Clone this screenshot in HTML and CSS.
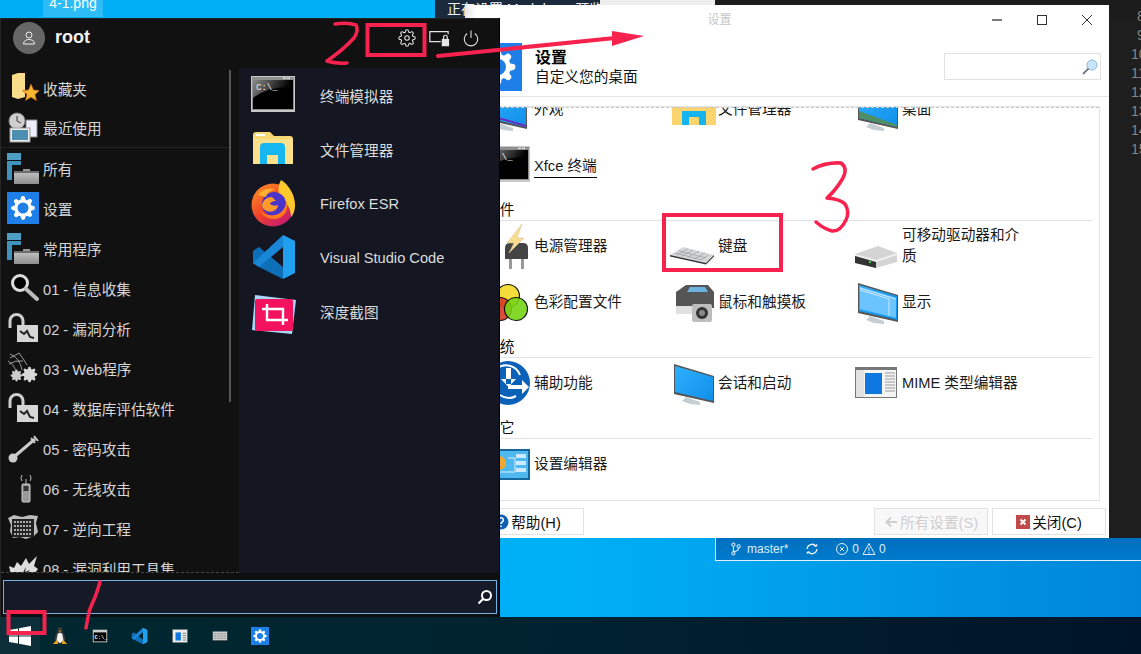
FILE: index.html
```html
<!DOCTYPE html>
<html lang="zh-CN">
<head>
<meta charset="utf-8">
<title>设置</title>
<link rel="stylesheet" href="styles.css">
</head>
<body>
<svg class="sprites" aria-hidden="true">
  <defs>
    <linearGradient id="g-term" x1="0" y1="0" x2="1" y2="0.3"><stop offset="0" stop-color="#8a8a8a"/><stop offset="1" stop-color="#000"/></linearGradient>
    <linearGradient id="g-tray" x1="0" y1="0" x2="0" y2="1"><stop offset="0" stop-color="#bdbdbd"/><stop offset="1" stop-color="#8e8e8e"/></linearGradient>
    <linearGradient id="g-fox" x1="0" y1="0" x2="0.8" y2="1"><stop offset="0" stop-color="#ff9a1f"/><stop offset="0.55" stop-color="#f0402c"/><stop offset="1" stop-color="#c0187a"/></linearGradient>
    <linearGradient id="g-screen" x1="0" y1="0" x2="1" y2="1"><stop offset="0" stop-color="#2fb0ff"/><stop offset="1" stop-color="#0f8fe8"/></linearGradient>
    <symbol id="gear" viewBox="0 0 24 24"><path d="M19.4 15a1.65 1.65 0 0 0 .33 1.82l.06.06a2 2 0 0 1 0 2.83 2 2 0 0 1-2.83 0l-.06-.06a1.65 1.65 0 0 0-1.82-.33 1.65 1.65 0 0 0-1 1.51V21a2 2 0 0 1-2 2 2 2 0 0 1-2-2v-.09A1.65 1.65 0 0 0 9 19.4a1.65 1.65 0 0 0-1.82.33l-.06.06a2 2 0 0 1-2.83 0 2 2 0 0 1 0-2.83l.06-.06a1.65 1.65 0 0 0 .33-1.82 1.65 1.65 0 0 0-1.51-1H3a2 2 0 0 1-2-2 2 2 0 0 1 2-2h.09A1.65 1.65 0 0 0 4.6 9a1.65 1.65 0 0 0-.33-1.82l-.06-.06a2 2 0 0 1 0-2.83 2 2 0 0 1 2.83 0l.06.06a1.65 1.65 0 0 0 1.82.33H9a1.65 1.65 0 0 0 1-1.51V3a2 2 0 0 1 2-2 2 2 0 0 1 2 2v.09a1.65 1.65 0 0 0 1 1.51 1.65 1.65 0 0 0 1.82-.33l.06-.06a2 2 0 0 1 2.83 0 2 2 0 0 1 0 2.83l-.06.06a1.65 1.65 0 0 0-.33 1.82V9a1.65 1.65 0 0 0 1.51 1H21a2 2 0 0 1 2 2 2 2 0 0 1-2 2h-.09a1.65 1.65 0 0 0-1.51 1z"/></symbol>
    <symbol id="bluegear" viewBox="0 0 32 32"><rect width="32" height="32" fill="#1f7fe8"/><use href="#gear" x="3" y="3" width="26" height="26" fill="#fff"/><circle cx="16" cy="16" r="5.500" fill="#1f7fe8"/></symbol>
    <symbol id="folders" viewBox="0 0 32 32"><rect x="0" y="1" width="14" height="7" fill="#4f9fc4"/><path d="M0 9h14v4H5v15H0z" fill="#3f93bb"/><rect x="16" y="17" width="7" height="2" fill="#999"/><rect x="7" y="19" width="25" height="2" fill="#6d6d6d"/><rect x="7" y="21" width="25" height="11" fill="url(#g-tray)"/></symbol>
    <symbol id="lock" viewBox="0 0 32 32"><path d="M3 16V9a6.500 6.500 0 0 1 13 0v4" fill="none" stroke="#cfcfcf" stroke-width="3"/><rect x="10" y="13" width="21" height="17" fill="#d6d6d6"/><path d="M13 19l4 3 3-3 3 6 4 1" fill="none" stroke="#222" stroke-width="2"/></symbol>
    <symbol id="terminal" viewBox="0 0 48 48"><rect x="3" y="5" width="44" height="36" fill="#c8c8c8"/><rect x="4" y="6" width="42" height="33" fill="#8f8f8f"/><rect x="5" y="9" width="40" height="29" fill="#000"/><path d="M5 9h36v7q-22 0-36 11z" fill="url(#g-term)"/><rect x="35" y="6.500" width="3" height="1.500" fill="#ddd"/><rect x="39" y="6.500" width="3" height="1.500" fill="#ddd"/><text x="8" y="19" class="term-text">C:\_</text></symbol>
    <symbol id="monitor" viewBox="0 0 48 48"><path d="M4 5l40 12v27L4 35z" fill="#555"/><path d="M5 7l38 11v24L5 33z" fill="url(#g-screen)"/><path d="M16 38l14 5v3l-10-1-8-3z" fill="#c5cdd2"/></symbol>
    <symbol id="vscode" viewBox="0 0 48 48"><path d="M32 46V34L8 14l-6 4v12l6 4z" fill="#0d6fb8"/><path d="M32 2v12L8 34l-6-4z" fill="#1a86d8"/><path d="M32 2l12 6v32l-12 6z" fill="#21a0f0"/></symbol>
  </defs>
</svg>

<div class="desktop">
  <div class="file-label">4-1.png</div>

  <div class="code-window">
    <div class="code-tabs">
      <div class="code-status-title">正在设置 Markdown 预览</div>
      <div class="code-tab-light"></div>
      <div class="code-tab-dark"></div>
    </div>
    <div class="line-numbers">
      <span class="one">8</span><span class="one">9</span><span>10</span><span>11</span><span>12</span><span>13</span><span>14</span><span>15</span>
    </div>
  </div>

  <div class="status-bar">
    <svg class="st-ic" viewBox="0 0 14 16"><g fill="none" stroke="#dfeefa" stroke-width="1.200"><circle cx="4" cy="3" r="1.800"/><circle cx="4" cy="13" r="1.800"/><circle cx="10" cy="5" r="1.800"/><path d="M4 5v6M10 7q0 3-6 4"/></g></svg>
    <span class="st-branch">master*</span>
    <svg class="st-ic st-sync" viewBox="0 0 16 16"><g fill="none" stroke="#eaf4fc" stroke-width="1.500"><path d="M2.500 8a5.500 5.500 0 0 1 10-3"/><path d="M13.500 8a5.500 5.500 0 0 1-10 3"/></g><path d="M10 5h4V2zM6 11H2v3z" fill="#eaf4fc"/></svg>
    <svg class="st-ic st-err" viewBox="0 0 14 14"><g fill="none" stroke="#dfeefa" stroke-width="1"><circle cx="7" cy="7" r="5.500"/><path d="M5 5l4 4M9 5l-4 4"/></g></svg>
    <span>0</span>
    <svg class="st-ic" viewBox="0 0 14 14"><path d="M7 1.500L13 12.500H1zM7 5v4M7 10v1.500" fill="none" stroke="#dfeefa" stroke-width="1"/></svg>
    <span>0</span>
  </div>

  <section class="settings">
    <div class="titlebar">
      <div class="win-title">设置</div>
      <div class="win-btn"><svg viewBox="0 0 12 12"><path d="M1 6h10" stroke="#222" stroke-width="1.200"/></svg></div>
      <div class="win-btn"><svg viewBox="0 0 12 12"><rect x="1.500" y="1.500" width="9" height="9" fill="none" stroke="#333"/></svg></div>
      <div class="win-btn"><svg viewBox="0 0 12 12"><path d="M1 1l10 10M11 1L1 11" stroke="#333"/></svg></div>
    </div>
    <header class="set-head">
      <svg class="ic48" viewBox="0 0 48 48"><rect width="48" height="48" fill="#1f7fe8"/><use href="#gear" x="5" y="5" width="38" height="38" fill="#fff"/><circle cx="24" cy="24" r="8" fill="#1f7fe8"/></svg>
      <div class="set-head-text">
        <h1>设置</h1>
        <p>自定义您的桌面</p>
      </div>
      <div class="set-search">
        <svg viewBox="0 0 18 18"><circle cx="11" cy="7" r="5" fill="#c7e6fb" stroke="#8fb8d6"/><path d="M7.500 10.500L2 16" stroke="#6d7a85" stroke-width="1.800"/></svg>
      </div>
    </header>

    <div class="frame">
      <div class="frame-scroll">
        <div class="grid">
          <div class="item">
            <svg class="ic48 ic-left" viewBox="0 0 48 48"><use href="#monitor" width="48" height="48"/><path d="M5 30l38 11" stroke="#6a2fc0" stroke-width="2"/></svg>
            <span>外观</span>
          </div>
          <div class="item">
            <svg class="ic48" viewBox="0 0 48 48"><path d="M2 12h44v28H2z" fill="#fbd46e"/><path d="M12 26h24v14h-7V32H19v8h-7z" fill="#16b4ee"/></svg>
            <span>文件管理器</span>
          </div>
          <div class="item">
            <svg class="ic48" viewBox="0 0 48 48"><use href="#monitor" width="48" height="48"/><path d="M5 26l38 14v2L5 33z" fill="#4f8f63"/></svg>
            <span>桌面</span>
          </div>
          <div class="item">
            <svg class="ic48 ic-left" viewBox="0 0 48 48"><use href="#terminal" width="48" height="48"/></svg>
            <span class="underlined">Xfce 终端</span>
          </div>
        </div>

        <h2 class="cat">硬件</h2>
        <div class="grid">
          <div class="item">
            <svg class="ic48" viewBox="0 0 48 48"><path d="M19 26q0-5 5-5h13q5 0 5 5v11H19z" fill="#444"/><path d="M23 37h3v10h-3zM35 37h3v10h-3z" fill="#999"/><path d="M36 2L21 21h7l-5 10 15-15h-7l5-14z" fill="#f9dc8e" stroke="#cfc8a0" stroke-width=".6"/></svg>
            <span>电源管理器</span>
          </div>
          <div class="item">
            <svg class="ic48" viewBox="0 0 48 48"><path d="M0 33L13 25l31 8-8 8z" fill="#d4d6d8"/><path d="M0 33l36 8 8-8v1.500L36 42.500 0 34.500z" fill="#333"/><path d="M7 33l11-6M12 34l11-6M18 35l11-6M24 37l11-6M31 38l7-5M5 31l27 7M9 29l27 7" stroke="#9a9ea2" stroke-width=".7"/></svg>
            <span>键盘</span>
          </div>
          <div class="item">
            <svg class="ic48" viewBox="0 0 48 48"><path d="M1 32l23-8 19 7v9L22 46 1 41z" fill="#d4d4d4"/><path d="M1 32l21 6 21-7v2L22 40 1 34z" fill="#f0f0f0"/><path d="M1 34l21 6v6L1 41z" fill="#333"/><circle cx="16" cy="40" r="1.200" fill="#3ad13a"/></svg>
            <span class="narrow">可移动驱动器和介质</span>
          </div>
          <div class="item">
            <svg class="ic48" viewBox="0 0 48 48"><g stroke="#111" stroke-width="1.200"><circle cx="22" cy="18" r="11.500" fill="#f4dc3a"/><circle cx="14" cy="31" r="11.500" fill="#d83a24" fill-opacity=".9"/><circle cx="30" cy="31" r="11.500" fill="#76d414" fill-opacity=".9"/></g></svg>
            <span>色彩配置文件</span>
          </div>
          <div class="item">
            <svg class="ic48" viewBox="0 0 48 48"><path d="M6 14l10-7h22l6 7v16H6z" fill="#555"/><path d="M20 9h15l3 5H17z" fill="#6cb2e0"/><path d="M6 28h32v8H6z" fill="#e0e0e0"/><rect x="22" y="26" width="20" height="18" rx="2" fill="#bdbdbd"/><circle cx="32" cy="35" r="6" fill="#333"/><circle cx="32" cy="35" r="3" fill="#888"/></svg>
            <span>鼠标和触摸板</span>
          </div>
          <div class="item">
            <svg class="ic48" viewBox="0 0 48 48"><use href="#monitor" width="48" height="48"/><path d="M6 9l36 11v20L6 31z" fill="#6cc4ff"/><path d="M6 12l29 9v17M6 10l36 11" fill="none" stroke="#cfeaff"/></svg>
            <span>显示</span>
          </div>
        </div>

        <h2 class="cat">系统</h2>
        <div class="grid">
          <div class="item">
            <svg class="ic48" viewBox="0 0 48 48"><circle cx="22" cy="24" r="22" fill="#0a62b8"/><path d="M12 34a15 15 0 1 1 22-18" fill="none" stroke="#fff" stroke-width="2"/><path d="M20 9h5v16h-5zM15 20l7.500 8 7.500-8z" fill="#fff"/><path d="M22 26h14v-5l7 7-7 7v-5H22z" fill="#fff"/><path d="M14 36a15 15 0 0 0 16 1" fill="none" stroke="#fff" stroke-width="2"/></svg>
            <span>辅助功能</span>
          </div>
          <div class="item">
            <svg class="ic48" viewBox="0 0 48 48"><use href="#monitor" width="48" height="48"/></svg>
            <span>会话和启动</span>
          </div>
          <div class="item">
            <svg class="ic48" viewBox="0 0 48 48"><rect x="1.500" y="8.500" width="41" height="30" fill="#f4f4f4" stroke="#777"/><rect x="1" y="8" width="42" height="3" fill="#777"/><rect x="2" y="11" width="8" height="27" fill="#e2e2e2"/><rect x="11" y="14" width="17" height="21" fill="#0f78e0"/><path d="M31 14h10M31 17h10M31 20h10M31 23h10M31 26h10M31 29h10M31 32h10" stroke="#999"/></svg>
            <span>MIME 类型编辑器</span>
          </div>
        </div>

        <h2 class="cat">其它</h2>
        <div class="grid">
          <div class="item">
            <svg class="ic48" viewBox="0 0 48 48"><rect x="2" y="10" width="41" height="29" fill="#4fb8ee" stroke="#14689e" stroke-width="2"/><circle cx="13" cy="23" r="7" fill="#f2a92f"/><path d="M22 18h7v14H13" fill="none" stroke="#d9f1ff"/><rect x="30" y="14" width="10" height="4" fill="#cdeaff"/><rect x="30" y="21" width="10" height="4" fill="#cdeaff"/><rect x="30" y="28" width="10" height="4" fill="#cdeaff"/></svg>
            <span>设置编辑器</span>
          </div>
        </div>
      </div>
    </div>

    <footer class="set-foot">
      <button class="btn btn-help"><svg viewBox="0 0 16 16"><circle cx="8" cy="8" r="7.500" fill="#0f5fb5"/><path d="M5.800 6a2.300 2.300 0 1 1 3.400 2c-1 .6-1.200 1-1.200 2M8 11.500v1.500" fill="none" stroke="#fff" stroke-width="1.500"/></svg><span>帮助(H)</span></button>
      <div class="foot-right">
        <button class="btn btn-off"><svg viewBox="0 0 14 14"><path d="M13 7H3M7 2.500L2.500 7 7 11.500" fill="none" stroke="#cfcfcf" stroke-width="2"/></svg><span>所有设置(S)</span></button>
        <button class="btn"><svg viewBox="0 0 14 14"><rect width="14" height="14" fill="#c04a4a"/><path d="M4.500 4.500l5 5M9.500 4.500l-5 5" stroke="#fff" stroke-width="1.800"/></svg><span>关闭(C)</span></button>
      </div>
    </footer>
  </section>

  <aside class="menu">
    <header class="menu-head">
      <div class="avatar"><svg viewBox="0 0 16 16"><circle cx="8" cy="5" r="3" fill="none" stroke="#eee" stroke-width="1"/><path d="M2.500 14c0-3 2.500-4.500 5.500-4.500s5.500 1.500 5.500 4.500z" fill="none" stroke="#eee" stroke-width="1"/></svg></div>
      <div class="user">root</div>
      <div class="head-icons">
        <svg viewBox="0 0 24 24"><use href="#gear" width="24" height="24" fill="none" stroke="#e6e6e6" stroke-width="1.400"/><circle cx="12" cy="12" r="3" fill="none" stroke="#e6e6e6" stroke-width="1.400"/></svg>
        <svg class="head-lock" viewBox="0 0 24 24"><path d="M14 16H2V5h20v3" fill="none" stroke="#e6e6e6" stroke-width="1.300"/><rect x="15" y="13" width="8" height="8" fill="#e6e6e6"/><path d="M17 13v-2a2 2 0 0 1 4 0v2" fill="none" stroke="#e6e6e6" stroke-width="1.300"/></svg>
        <svg viewBox="0 0 24 24"><path d="M7 6a9 9 0 1 0 10 0" fill="none" stroke="#e6e6e6" stroke-width="1.400"/><path d="M12 2v10" stroke="#e6e6e6" stroke-width="1.400"/></svg>
      </div>
    </header>

    <div class="menu-body">
      <nav class="cats">
        <div class="cat-row">
          <svg class="ic32" viewBox="0 0 32 32"><path d="M5 3l6-2h7v24l-7 2-6-2z" fill="#fbdc8a"/><path d="M24 12l2.500 6 6 .5-4.500 4 1.500 6-5.500-3.200-5.500 3.200 1.500-6-4.500-4 6-.5z" fill="#f8b733" stroke="#c8601a" stroke-width=".6"/></svg>
          <span>收藏夹</span>
        </div>
        <div class="cat-row cat-sep">
          <svg class="ic32" viewBox="0 0 32 32"><circle cx="10" cy="9" r="8" fill="#cfcfcf" stroke="#888"/><path d="M10 4v5l4 2" fill="none" stroke="#333"/><path d="M19 8h11v17H19z" fill="#eef" stroke="#888"/><rect x="3" y="16" width="20" height="14" fill="#eee" stroke="#999"/><rect x="5" y="18" width="16" height="10" fill="#4d8fb0"/></svg>
          <span>最近使用</span>
        </div>
        <div class="cat-row"><svg class="ic32" viewBox="0 0 32 32"><use href="#folders" width="32" height="32"/></svg><span>所有</span></div>
        <div class="cat-row"><svg class="ic32" viewBox="0 0 32 32"><use href="#bluegear" width="32" height="32"/></svg><span>设置</span></div>
        <div class="cat-row"><svg class="ic32" viewBox="0 0 32 32"><use href="#folders" width="32" height="32"/></svg><span>常用程序</span></div>
        <div class="cat-row">
          <svg class="ic32" viewBox="0 0 32 32"><circle cx="13" cy="11" r="7.500" fill="#000" stroke="#ddd" stroke-width="3"/><path d="M19 17l11 10" stroke="#bbb" stroke-width="4" stroke-linecap="round"/></svg>
          <span>01 - 信息收集</span>
        </div>
        <div class="cat-row"><svg class="ic32" viewBox="0 0 32 32"><use href="#lock" width="32" height="32"/></svg><span>02 - 漏洞分析</span></div>
        <div class="cat-row">
          <svg class="ic32" viewBox="0 0 32 32"><path d="M3 2q10 4 12 16M1 9q6 3 8 11M12 1q4 5 8 12M3 6q6-3 9-5M2 12q6-4 14-3" fill="none" stroke="#bbb" stroke-width=".8"/><use href="#gear" x="3" y="17" width="13" height="13" fill="#ccc"/><use href="#gear" x="14" y="14" width="17" height="17" fill="#d8d8d8"/></svg>
          <span>03 - Web程序</span>
        </div>
        <div class="cat-row"><svg class="ic32" viewBox="0 0 32 32"><use href="#lock" width="32" height="32"/></svg><span>04 - 数据库评估软件</span></div>
        <div class="cat-row">
          <svg class="ic32" viewBox="0 0 32 32"><circle cx="6" cy="26" r="4.500" fill="#ccc"/><path d="M8 24L28 7" stroke="#ccc" stroke-width="3"/><path d="M24 6l4 5M27 4l4 5" stroke="#ccc" stroke-width="2"/></svg>
          <span>05 - 密码攻击</span>
        </div>
        <div class="cat-row">
          <svg class="ic32" viewBox="0 0 32 32"><rect x="15" y="12" width="8" height="18" rx="1" fill="#999" stroke="#ccc"/><rect x="16.500" y="14" width="5" height="5" fill="#333"/><path d="M19 12V7M15 9a5 5 0 0 1 0-6M23 9a5 5 0 0 0 0-6" fill="none" stroke="#bbb"/></svg>
          <span>06 - 无线攻击</span>
        </div>
        <div class="cat-row">
          <svg class="ic32" viewBox="0 0 32 32"><path d="M1 6l6-3 8 2 8-2 8 1-2 7 2 9-4 4-8 3-6-2-7 1-3-7 1-6z" fill="#bbb"/><rect x="5" y="7" width="22" height="18" fill="#222"/><path d="M7 10h18M7 14h18M7 18h18M7 22h18" stroke="#aaa" stroke-width="2" stroke-dasharray="2 1"/></svg>
          <span>07 - 逆向工程</span>
        </div>
        <div class="cat-row">
          <svg class="ic32" viewBox="0 0 32 32"><path d="M2 14l5 2 3-6 4 4 5-8 3 6 8-8-3 10 4 3-3 4 3 4-6 2-8-2-8 3-5-5z" fill="#ddd"/><path d="M14 24l5-9-1 5 5-2-7 8z" fill="#222"/></svg>
          <span>08 - 漏洞利用工具集</span>
        </div>
        <div class="scroll-thumb"></div>
      </nav>

      <div class="apps">
        <div class="app"><svg class="ic48" viewBox="0 0 48 48"><use href="#terminal" width="48" height="48"/></svg><span>终端模拟器</span></div>
        <div class="app">
          <svg class="ic48" viewBox="0 0 48 48"><path d="M5 10q0-3 3-3h14l4 4h16q3 0 3 3v25H5z" fill="#f8d775"/><path d="M5 14h40v24q0 1-1 1H6q-1 0-1-1z" fill="#fbe08e"/><path d="M12 22q0-4 4-4h17q4 0 4 4v17h-7v-9H19v9h-7z" fill="#16b6f0"/><rect x="8" y="9" width="9" height="2" fill="#fff"/></svg>
          <span>文件管理器</span>
        </div>
        <div class="app">
          <svg class="ic48" viewBox="0 0 48 48"><circle cx="25" cy="26" r="21.500" fill="url(#g-fox)"/><path d="M33 1C41 6 47 16 47 26c0 6-2 10-4 12 0-8-4-14-9-18-4-4-5-12-1-19z" fill="#ffc92e"/><circle cx="26" cy="25" r="12" fill="#4a35c8"/><path d="M14 26c1-5 5-8 10-8l4 4c-4 0-6 2-6 3 2 2 7 2 8 1 0 5-6 8-11 6-3-1-5-3-5-6z" fill="#ff9a2a"/><path d="M38 22c4 8-2 18-12 18-6 0-12-3-14-9 4 6 14 7 20 3 4-3 6-7 6-12z" fill="#ff7a1e"/><path d="M10 16c4-6 10-7 17-6-4 2-8 4-9 8z" fill="#ffb02e"/></svg>
          <span class="latin">Firefox ESR</span>
        </div>
        <div class="app">
          <svg class="ic48 app-code" viewBox="0 0 48 48"><use href="#vscode" width="48" height="48"/></svg>
          <span class="latin">Visual Studio Code</span>
        </div>
        <div class="app">
          <svg class="ic48" viewBox="0 0 48 48"><path d="M7 8l41 5-4 34L4 43z" fill="#a7d6f7"/><rect x="7" y="12" width="38" height="32" rx="2" fill="#f2125e"/><path d="M19 17V33H40M14 22H35V38" fill="none" stroke="#fff" stroke-width="2.400"/></svg>
          <span>深度截图</span>
        </div>
      </div>
    </div>

    <div class="menu-foot">
      <div class="menu-search">
        <svg viewBox="0 0 16 16"><circle cx="9.500" cy="6.500" r="4.500" fill="none" stroke="#fff" stroke-width="2"/><path d="M6 10l-4.500 4.500" stroke="#fff" stroke-width="2.200"/></svg>
      </div>
    </div>
  </aside>
</div>

<footer class="taskbar">
  <div class="task task-start"><svg viewBox="0 0 22 20"><path d="M0 4l9-1.500v7H0zM10 2.300L22 0v9.500H10zM0 10.500h9v7L0 16zM10 10.500h12V20l-12-2.200z" fill="#fff"/></svg></div>
  <div class="task"><svg viewBox="0 0 20 20"><path d="M10 0q3 0 3 5 3 5 3 9l-3 4H7l-3-4q0-4 3-9 0-5 3-5z" fill="#3a3a3a"/><path d="M7.500 8q2.500-3 5 0l1.500 7-4 3-4-3z" fill="#f2f2f2"/><path d="M2 19l5-5 1 5zM18 19l-5-5-1 5z" fill="#e8a21c"/><path d="M9 4h2l-1 2z" fill="#e8a21c"/></svg></div>
  <div class="task"><svg viewBox="0 0 20 20"><rect x="2" y="3" width="16" height="14" fill="#cfcfcf"/><rect x="3" y="6" width="14" height="10" fill="#000"/><text x="4" y="13.500" class="term-small">C:\_</text></svg></div>
  <div class="task"><svg viewBox="0 0 48 48"><use href="#vscode" width="48" height="48"/></svg></div>
  <div class="task"><svg viewBox="0 0 20 20"><rect x="2" y="3" width="16" height="14" fill="#eee" stroke="#999" stroke-width=".6"/><rect x="5" y="6" width="6" height="9" fill="#0f78e0"/><path d="M13 7h4M13 9.500h4M13 12h4M13 14.500h4" stroke="#777"/></svg></div>
  <div class="task"><svg viewBox="0 0 20 20"><rect x="2" y="5" width="16" height="10" fill="#cfcfcf"/><path d="M3 7.500h14M3 10h14M3 12.500h14" stroke="#777" stroke-dasharray="1 .6"/><rect x="2" y="14.500" width="16" height="1" fill="#555"/></svg></div>
  <div class="task"><svg viewBox="0 0 32 32"><use href="#bluegear" width="32" height="32"/></svg></div>
</footer>

<svg class="marks" viewBox="0 0 1141 654" aria-hidden="true">
  <g fill="none" stroke="#f8224f" stroke-linecap="round" stroke-linejoin="round">
    <rect x="8.500" y="612" width="36" height="21" stroke-width="4" stroke-linejoin="miter"/>
    <path d="M100 582Q96 596 92 604 89 610 88 617L86 628" stroke-width="3.500"/>
    <path d="M335 24Q348 22 356 25 359 30 354 38 343 50 327 61 336 64 347 63" stroke-width="3.500"/>
    <rect x="367.500" y="25" width="57" height="30" stroke-width="4" stroke-linejoin="miter"/>
    <path d="M438 56L615 38" stroke-width="4"/>
    <rect x="664" y="215" width="117" height="55" stroke-width="4" stroke-linejoin="miter"/>
    <path d="M813 169Q826 162 841 163 848 168 843 178 836 190 827 198 840 199 845 204 850 212 846 220 840 232 832 231 824 229 816 222" stroke-width="3.500"/>
  </g>
  <path d="M612 31L644 36 612 46z" fill="#f8224f"/>
</svg>
</body>
</html>
```
FILE: styles.css
```css
* { box-sizing: border-box; }
html, body { margin: 0; padding: 0; }
body {
  position: relative;
  width: 1141px;
  height: 654px;
  overflow: hidden;
  display: flex;
  flex-direction: column;
  font-family: "Liberation Sans", "Noto Sans CJK SC", sans-serif;
  font-size: 14.67px;
  color: #111;
}
.sprites { position: absolute; width: 0; height: 0; }
.term-text { font-family: "Liberation Mono", monospace; font-size: 9px; fill: #eee; }
.term-small { font-family: "Liberation Mono", monospace; font-size: 6px; font-weight: bold; fill: #fff; }

.desktop {
  position: relative;
  flex: 1;
  overflow: hidden;
  background: linear-gradient(90deg, #00aef6 0%, #00b0f6 50%, #0086d8 100%);
}
.file-label {
  position: absolute;
  left: 43px;
  top: 0;
  width: 60px;
  height: 17px;
  background: rgba(255, 255, 255, .18);
  color: #fff;
  font-size: 14px;
  line-height: 6px;
  text-align: center;
  white-space: nowrap;
  overflow: hidden;
}

.code-window {
  position: absolute;
  left: 435px;
  top: 0;
  width: 706px;
  height: 538px;
  background: #1e1e1e;
}
.code-tabs { display: flex; height: 18px; }
.code-status-title {
  width: 165px;
  padding-left: 12px;
  background: #1c2a3d;
  color: #f0f0f0;
  font-size: 14px;
  line-height: 18px;
  white-space: nowrap;
  overflow: hidden;
}
.code-tab-light { width: 115px; background: #eee; }
.code-tab-dark { flex: 1; background: #1c1c1c; }
.line-numbers {
  display: flex;
  flex-direction: column;
  margin-top: -11px;
  padding-left: 696px;
  color: #858585;
  font-size: 14px;
  line-height: 19px;
  overflow: hidden;
}
.line-numbers span { white-space: nowrap; }
.line-numbers .one { padding-left: 6px; }

.status-bar {
  position: absolute;
  left: 715px;
  top: 538px;
  width: 426px;
  height: 23px;
  display: flex;
  align-items: center;
  padding: 0 0 1px 13px;
  background: linear-gradient(180deg, #006fbf, #007acb);
  border-left: 1px solid #e6f2fb;
  border-bottom: 1px solid #e6f2fb;
  color: #dfeefa;
  font-size: 12px;
  gap: 3px;
}
.st-ic { width: 14px; height: 14px; flex: none; }
.st-branch { margin-right: 14px; margin-left: 1px; }
.st-sync { margin-right: 13px; }

.settings {
  position: absolute;
  left: 465px;
  top: 5px;
  width: 644px;
  height: 533px;
  display: flex;
  flex-direction: column;
  background: linear-gradient(90deg, #e8e8e8 0, #fff 12px);
}
.titlebar { display: flex; height: 30px; flex: none; }
.win-title {
  flex: 1;
  text-align: center;
  color: #c6c6c6;
  font-size: 12px;
  line-height: 30px;
}
.win-btn {
  width: 45px;
  display: flex;
  align-items: center;
  justify-content: center;
}
.win-btn svg { width: 12px; height: 12px; }
.set-head {
  display: flex;
  align-items: flex-start;
  height: 62px;
  flex: none;
  padding: 8px 8px 0 9px;
  border-bottom: 1px solid #e4e4e4;
}
.ic48 { width: 48px; height: 48px; flex: none; display: block; }
.ic-left { margin: 0 3px 0 -3px; }
.set-head-text { margin-left: 13px; flex: 1; }
.set-head-text h1 { margin: 5px 0 -1px; font-size: 16px; line-height: 20px; font-weight: bold; color: #000; }
.set-head-text p { margin: 0; font-size: 14.67px; line-height: 20px; color: #111; }
.set-search {
  width: 157px;
  height: 27px;
  margin-top: 10px;
  border: 1px solid #e2e2e2;
  display: flex;
  align-items: center;
  justify-content: flex-end;
  padding-right: 1px;
}
.set-search svg { width: 18px; height: 18px; }

.frame {
  height: 395px;
  flex: none;
  margin: 9px 9px 0 5px;
  border: 1px solid #e4e4e4;
  overflow: hidden;
  position: relative;
}
.frame::before {
  content: "";
  position: absolute;
  left: 0;
  right: 0;
  top: 0;
  border-top: 1px dashed #c9c9c9;
  z-index: 1;
}
.frame-scroll { margin-top: -22px; padding: 0 6px 0 15px; }
.grid { display: grid; grid-template-columns: repeat(3, 184px); row-gap: 8px; }
.item { display: flex; align-items: center; height: 48px; line-height: 21px; color: #1a1a1a; }
.underlined { border-bottom: 1px solid #000; padding-bottom: 1px; line-height: 20px; margin-top: 4px; }
.narrow { width: 126px; }
.cat {
  margin: 11px 0 1px -1px;
  font-size: 14.67px;
  font-weight: normal;
  line-height: 20px;
  height: 21px;
  color: #111;
  border-bottom: 1px solid #e2e2e2;
}

.set-foot {
  display: flex;
  justify-content: space-between;
  padding: 7px 3px 0 5px;
}
.foot-right { display: flex; gap: 4px; }
.btn {
  width: 114px;
  height: 27px;
  display: flex;
  align-items: center;
  justify-content: center;
  gap: 2px;
  padding: 0;
  background: #fff;
  border: 1px solid #e2e2e2;
  font: inherit;
  color: #111;
}
.btn svg { width: 14px; height: 14px; }
.btn-help svg { width: 16px; height: 16px; }
.btn-off { background: #f8f8f8; color: #cfcfcf; }

.menu {
  position: absolute;
  left: 0;
  top: 18px;
  z-index: 2;
  width: 500px;
  height: 599px;
  display: flex;
  flex-direction: column;
  background: #0f0f10;
  border-right: 1px solid #000;
  border-left: 1px solid #262626;
  color: #dcdcdc;
}
.menu-head {
  display: flex;
  align-items: center;
  height: 51px;
  flex: none;
  padding: 0 19px 13px 12px;
  background: #111;
  border-top: 1px solid #222;
}
.avatar {
  width: 32px;
  height: 32px;
  border-radius: 50%;
  background: #666;
  display: flex;
  align-items: center;
  justify-content: center;
}
.avatar svg { width: 16px; height: 16px; }
.user { margin-left: 10px; font-size: 18px; font-weight: bold; color: #f2f2f2; flex: 1; }
.head-icons { display: flex; gap: 14px; }
.head-icons svg { width: 18px; height: 18px; display: block; }
.head-icons .head-lock { width: 22px; height: 22px; margin: -2px; }

.menu-body { display: flex; flex: 1; min-height: 0; }
.cats {
  position: relative;
  width: 238px;
  flex: none;
  background: #111;
  overflow: hidden;
  margin-top: -1px;
  border-bottom: 1px dashed #444;
}
.cat-row {
  display: flex;
  align-items: center;
  gap: 4px;
  height: 40px;
  padding-left: 6px;
  margin-right: 10px;
  white-space: nowrap;
  color: #d6d6d6;
}
.cat-sep { border-bottom: 1px solid #222; }
.ic32 { width: 32px; height: 32px; flex: none; }
.scroll-thumb {
  position: absolute;
  left: 228px;
  top: 2px;
  width: 2px;
  height: 332px;
  background: #555;
}
.apps { flex: 1; background: #141722; margin-top: -1px; }
.app {
  display: flex;
  align-items: center;
  gap: 24px;
  height: 54px;
  padding-left: 9px;
  color: #dcdcdc;
}
.app .latin { padding-top: 2px; }
.app-code { margin: 0 -3px 0 3px; }

.menu-foot {
  height: 44px;
  flex: none;
  padding: 7px 2px 0 2px;
}
.menu-search {
  height: 34px;
  display: flex;
  align-items: center;
  justify-content: flex-end;
  padding-right: 3px;
  background: #161926;
  border: 1px solid #6fb2ea;
}
.menu-search svg { width: 16px; height: 16px; }

.marks {
  position: absolute;
  left: 0;
  top: 0;
  width: 1141px;
  height: 654px;
  pointer-events: none;
  z-index: 5;
}

.taskbar {
  display: flex;
  height: 37px;
  flex: none;
  background: linear-gradient(90deg, #00282f 0%, #002230 50%, #001428 100%);
}
.task {
  width: 40px;
  display: flex;
  align-items: center;
  justify-content: center;
}
.task svg { width: 18px; height: 18px; display: block; }
.task-start { background: #0d2f3a; }
.task-start svg { width: 22px; height: 20px; }
```
